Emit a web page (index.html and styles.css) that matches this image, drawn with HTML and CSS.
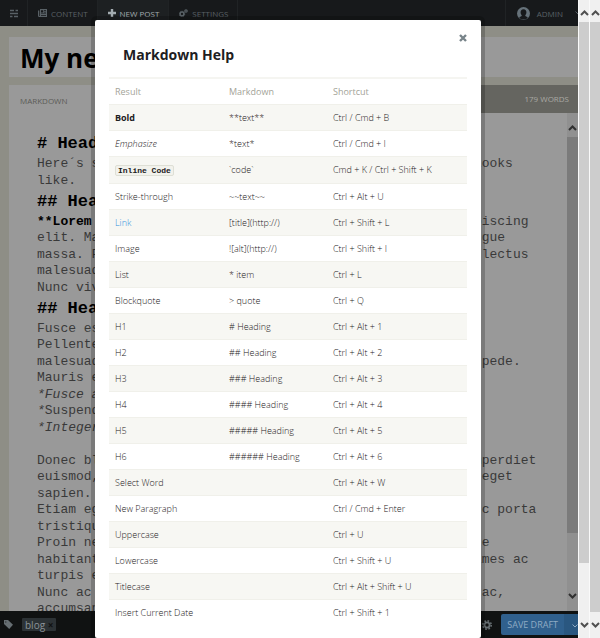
FILE: index.html
```html
<!DOCTYPE html>
<html lang="en">
<head>
<meta charset="utf-8">
<title>New Post</title>
<link rel="stylesheet" href="styles.css">
</head>
<body>
<div class="app">
  <header class="topbar">
    <a class="logo" href="#" aria-label="Home"><svg width="8" height="9" viewBox="0 0 8 9"><path d="M0 1.500h4M5.500 1.500H8M0 4.500h8M0 7.500h2.500M4 7.500h4" stroke="currentColor" stroke-width="1.300"/></svg></a>
    <nav class="nav">
      <a href="#"><svg width="9" height="8" viewBox="0 0 9 8"><path fill="currentColor" fill-rule="evenodd" d="M2 0h7v8H1.200A1.200 1.200 0 0 1 0 6.800V1.500h1.300V7H2zM3 1.200v2.300h2.200V1.200zM6 1.200v.7h2v-.7zM6 2.800v.7h2v-.7zM3 4.400v.7h5v-.7zM3 6v.7h5V6z"/></svg>CONTENT</a>
      <a class="active" href="#"><svg width="8" height="8" viewBox="0 0 8 8"><path fill="currentColor" d="M2.800 0h2.400v2.800H8v2.400H5.200V8H2.800V5.200H0V2.800h2.800z"/></svg>NEW POST</a>
      <a href="#"><svg width="9" height="8" viewBox="0 0 9 8"><circle cx="3" cy="5" r="1.900" fill="none" stroke="currentColor" stroke-width="1.500"/><circle cx="3" cy="5" r="2.700" fill="none" stroke="currentColor" stroke-width=".8" stroke-dasharray="1.200 .92"/><circle cx="7" cy="2" r="1.200" fill="none" stroke="currentColor" stroke-width="1.200"/></svg>SETTINGS</a>
    </nav>
    <button class="user" type="button"><svg width="13" height="13" viewBox="0 0 13 13"><circle cx="6.500" cy="6.500" r="6.500" fill="#66727a"/><path fill="#17191b" d="M6.500 2.200c2 0 3 1.400 2.900 3.100 0 1.300-.5 2.300-1.200 3 0 1.200 1.400 1.400 2.600 2L9 12.500H4l-1.800-2.200c1.200-.6 2.600-.8 2.600-2-.7-.7-1.200-1.700-1.200-3C3.500 3.600 4.500 2.200 6.500 2.200z"/></svg>ADMIN<svg class="caret" width="6" height="4" viewBox="0 0 6 4"><path d="M.5.500 3 3 5.500.5" fill="none" stroke="currentColor"/></svg></button>
  </header>
  <main class="page">
    <input class="title" type="text" aria-label="Post title" value="My new post">
    <section class="editor">
      <div class="editor-head"><span class="label">MARKDOWN</span><span class="count">179 WORDS</span></div>
      <div class="editor-body">
        <div class="source">
          <div class="line h"># Heading 1</div>
          <div class="line">Here´s some sample text to show how a Markdown document looks</div>
          <div class="line">like.</div>
          <div class="line h">## Heading 2</div>
          <div class="line"><b>**Lorem ipsum dolor sit amet**</b>, consectetuer et elit adipiscing</div>
          <div class="line">elit. Mauris vitae orci. Aenean commodo ligula eget et augue</div>
          <div class="line">massa. Fusce sociis natoque penatibus et magnis dis amet lectus</div>
          <div class="line">malesuada fames ac turpis egestas.</div>
          <div class="line">Nunc viverra imperdiet enim.</div>
          <div class="line h">## Heading 2</div>
          <div class="line">Fusce est. Vivamus a tellus.</div>
          <div class="line">Pellentesque habitant morbi tristique senectus.</div>
          <div class="line">malesuada fames ac turpis egestas. Proin pharetra nonumy pede.</div>
          <div class="line">Mauris et orci.</div>
          <div class="line"><i>*Fusce at sem*</i></div>
          <div class="line"><i>*</i>Suspendisse dui purus*</div>
          <div class="line"><i>*Integer nulla*</i></div>
          <div class="line">&nbsp;</div>
          <div class="line">Donec blandit mattis ligula. Donec hendrerit, felis et imperdiet</div>
          <div class="line">euismod, purus ipsum pretium metus, in lacinia nulla sem eget</div>
          <div class="line">sapien.</div>
          <div class="line">Etiam eget dui. Aliquam erat volutpat. Sed at odio in nunc porta</div>
          <div class="line">tristique.</div>
          <div class="line">Proin nec augue. Quisque aliquam justo magna. Pellentesque</div>
          <div class="line">habitant morbi tristique senecta et netus ac malesuada fames ac</div>
          <div class="line">turpis egestas.</div>
          <div class="line">Nunc ac magna. Maecenas odio dolor, vulputate vel, felis ac,</div>
          <div class="line">accumsan id, felis.</div>
        </div>
        <div class="bar inner" aria-hidden="true"><svg viewBox="0 0 9 6"><path d="M1 5 4.500 1.500 8 5"/></svg><div class="thumb"></div><svg viewBox="0 0 9 6"><path d="M1 1 4.500 4.500 8 1"/></svg></div>
      </div>
    </section>
  </main>
  <footer class="publish">
    <svg width="10" height="9" viewBox="0 0 10 9"><path fill="currentColor" fill-rule="evenodd" d="M0 0h4l5 4.700L5.200 9 0 4zM1.300 1.400v1h1v-1z"/></svg>
    <button class="tag" type="button">blog <span>×</span></button>
    <button class="gear" type="button" aria-label="Post settings"><svg width="10" height="10" viewBox="0 0 10 10"><circle cx="5" cy="5" r="2.600" fill="none" stroke="currentColor" stroke-width="1.800"/><circle cx="5" cy="5" r="4.200" fill="none" stroke="currentColor" stroke-width="1.600" stroke-dasharray="1.700 1.600"/></svg></button>
    <div class="save"><button type="button">SAVE DRAFT</button><button class="more" type="button" aria-label="More options"><svg width="6" height="4" viewBox="0 0 6 4"><path d="M.5.500 3 3 5.500.5" fill="none" stroke="currentColor"/></svg></button></div>
  </footer>
  <div class="overlay">
    <div class="modal" role="dialog" aria-labelledby="help-title">
      <div class="modal-head"><h1 id="help-title">Markdown Help</h1><button class="close" type="button" aria-label="Close"><svg width="8" height="8" viewBox="0 0 8 8"><path d="M1 1l6 6M7 1 1 7" stroke="currentColor" stroke-width="2.400"/></svg></button></div>
      <table>
        <thead><tr><th class="c1">Result</th><th class="c2">Markdown</th><th>Shortcut</th></tr></thead>
        <tbody>
          <tr><td><strong>Bold</strong></td><td>**text**</td><td>Ctrl / Cmd + B</td></tr>
          <tr><td><em>Emphasize</em></td><td>*text*</td><td>Ctrl / Cmd + I</td></tr>
          <tr class="tall"><td><code>Inline Code</code></td><td>`code`</td><td>Cmd + K / Ctrl + Shift + K</td></tr>
          <tr><td>Strike-through</td><td>~~text~~</td><td>Ctrl + Alt + U</td></tr>
          <tr><td><a href="#">Link</a></td><td>[title](http://)</td><td>Ctrl + Shift + L</td></tr>
          <tr><td>Image</td><td>![alt](http://)</td><td>Ctrl + Shift + I</td></tr>
          <tr><td>List</td><td>* item</td><td>Ctrl + L</td></tr>
          <tr><td>Blockquote</td><td>&gt; quote</td><td>Ctrl + Q</td></tr>
          <tr><td>H1</td><td># Heading</td><td>Ctrl + Alt + 1</td></tr>
          <tr><td>H2</td><td>## Heading</td><td>Ctrl + Alt + 2</td></tr>
          <tr><td>H3</td><td>### Heading</td><td>Ctrl + Alt + 3</td></tr>
          <tr><td>H4</td><td>#### Heading</td><td>Ctrl + Alt + 4</td></tr>
          <tr><td>H5</td><td>##### Heading</td><td>Ctrl + Alt + 5</td></tr>
          <tr><td>H6</td><td>###### Heading</td><td>Ctrl + Alt + 6</td></tr>
          <tr><td>Select Word</td><td></td><td>Ctrl + Alt + W</td></tr>
          <tr><td>New Paragraph</td><td></td><td>Ctrl / Cmd + Enter</td></tr>
          <tr><td>Uppercase</td><td></td><td>Ctrl + U</td></tr>
          <tr><td>Lowercase</td><td></td><td>Ctrl + Shift + U</td></tr>
          <tr><td>Titlecase</td><td></td><td>Ctrl + Alt + Shift + U</td></tr>
          <tr><td>Insert Current Date</td><td></td><td>Ctrl + Shift + 1</td></tr>
        </tbody>
      </table>
    </div>
  </div>
</div>
<div class="bar short" aria-hidden="true"><svg viewBox="0 0 9 6"><path d="M1 5 4.500 1.500 8 5"/></svg><div class="thumb"></div><svg viewBox="0 0 9 6"><path d="M1 1 4.500 4.500 8 1"/></svg></div>
<div class="bar" aria-hidden="true"><svg viewBox="0 0 9 6"><path d="M1 5 4.500 1.500 8 5"/></svg><div class="thumb"></div><svg viewBox="0 0 9 6"><path d="M1 1 4.500 4.500 8 1"/></svg></div>
</body>
</html>
```
FILE: styles.css
```css
* { box-sizing: border-box; }
body {
  margin: 0;
  height: 100vh;
  display: flex;
  overflow: hidden;
  background: #f8f8f8;
  font-family: "Open Sans", sans-serif;
}
button, input { font: inherit; color: inherit; border: 0; margin: 0; padding: 0; background: none; }
a { color: inherit; text-decoration: none; }

.app {
  flex: 1;
  min-width: 0;
  position: relative;
  display: flex;
  flex-direction: column;
  overflow: hidden;
}

/* Top navigation */
.topbar {
  height: 26px;
  flex: none;
  display: flex;
  background: #17191b;
  color: #596166;
  font-size: 8px;
}
.logo { width: 28px; display: flex; align-items: center; justify-content: center; border-right: 1px solid #202325; }
.nav { display: flex; flex: 1; }
.nav a { display: flex; align-items: center; gap: 4px; padding: 0 9px 0 10px; border-right: 1px solid #202325; }
.nav .active { color: #a3abb0; background: #1d2022; }
.user { display: flex; align-items: center; gap: 7px; padding-left: 11px; border-left: 1px solid #202325; }
.user .caret { margin-left: 5px; margin-right: -3px; }

/* Editor page */
.page {
  flex: 1;
  min-height: 0;
  display: flex;
  flex-direction: column;
  gap: 8px;
  padding: 11px 0 0 9px;
  background: #8e8e86;
}
.title {
  width: 100%;
  height: 40px;
  flex: none;
  padding: 2px 11px 0;
  background: #999;
  color: #000;
  font-size: 26px;
  font-weight: 700;
}
.editor { flex: 1; min-height: 0; display: flex; flex-direction: column; background: #999; }
.editor-head { height: 28px; flex: none; display: flex; font-size: 8px; line-height: 28px; }
.label { flex: 1; padding: 2px 11px 0; color: #5c5c57; }
.count { flex: 1; padding-right: 9px; text-align: right; background: #656560; color: #a9a9a4; }
.editor-body { flex: 1; min-height: 0; display: flex; }
.source {
  flex: 1;
  overflow: hidden;
  padding: 18px 0 0 28px;
  color: #393939;
  font-family: "Liberation Mono", monospace;
  font-size: 13px;
}
.line { height: 16px; line-height: 16px; white-space: pre; }
.line:nth-child(even) { height: 17px; }
.source .line.h { height: 25px; line-height: 25px; font-size: 17px; font-weight: 700; color: #000; }
.line b { color: #000; }

/* Scroll bars */
.bar {
  width: 11px;
  flex: none;
  display: flex;
  flex-direction: column;
  align-items: center;
  gap: 6px;
  padding: 10px 0;
  background: #f0f0f0;
  border-left: 1px solid #fafafa;
}
.bar svg { width: 9px; height: 6px; flex: none; }
.bar path { fill: none; stroke: #505050; stroke-width: 2; }
.thumb { flex: 1; width: 100%; margin-bottom: 4px; background: #cdcdcd; }
.short .thumb { margin-bottom: 53px; }
.inner { background: #909090; border: 0; padding: 12px 0; }
.inner .thumb { background: #7b7b7b; margin-bottom: 54px; }
.inner path { stroke: #303030; }

/* Publish bar */
.publish {
  height: 27px;
  flex: none;
  display: flex;
  align-items: center;
  padding-left: 4px;
  background: #101212;
  color: #666e72;
}
.tag {
  height: 13px;
  margin-left: 8px;
  padding: 0 3px;
  background: #2c3235;
  border-radius: 1px;
  color: #8b9398;
  font-size: 10px;
  line-height: 12px;
}
.tag span { color: #111; font-weight: 700; }
.gear { margin-left: auto; height: 10px; line-height: 10px; }
.gear svg { display: block; }
.save { display: flex; height: 21px; margin-left: 9px; border-radius: 2px 0 0 2px; background: #30608d; color: #8fabc4; font-size: 9px; }
.save button { padding: 0 6px; }
.save .more { width: 14px; padding: 0 0 0 7px; background: #2a5780; }

/* Help dialog */
.overlay { position: absolute; inset: 0; padding: 20px 2px 0 0; overflow: hidden; }
.modal {
  max-width: 386px;
  min-height: 100%;
  margin: 0 auto;
  padding: 0 14px;
  background: #fff;
  border-radius: 2px;
  box-shadow: 0 0 0 4px rgba(0, 0, 0, .2);
  color: #1d2022;
}
.modal-head {
  height: 59px;
  display: flex;
  justify-content: space-between;
  align-items: flex-start;
  padding-left: 14px;
  border-bottom: 2px solid #f5f5f1;
}
h1 { margin: 24px 0 0; font-size: 14px; line-height: 22px; color: #1d2022; }
.close { margin-top: 14px; color: #78848a; line-height: 8px; }
.close svg { display: block; }
table { width: 100%; border-collapse: collapse; table-layout: fixed; font-size: 9px; font-weight: 300; }
th, td { height: 26px; padding: 1px 0 0 6px; text-align: left; line-height: 16px; border-bottom: 1px solid #f0f0ea; }
th { height: 25px; color: #a3a398; font-weight: 400; }
.c1 { width: 114px; }
.c2 { width: 104px; }
tbody tr:nth-child(odd) { background: #f7f7f3; }
.tall td { height: 27px; }
tbody tr:last-child td { border-bottom: 0; }
td strong { font-weight: 700; }
td a { color: #2f8fdc; }
code {
  display: inline-block;
  vertical-align: middle;
  padding: 0 2px;
  border: 1px solid #dedfd5;
  border-radius: 2px;
  background: #f2f2ec;
  font: 700 8px/9px "Liberation Mono", monospace;
}
```
